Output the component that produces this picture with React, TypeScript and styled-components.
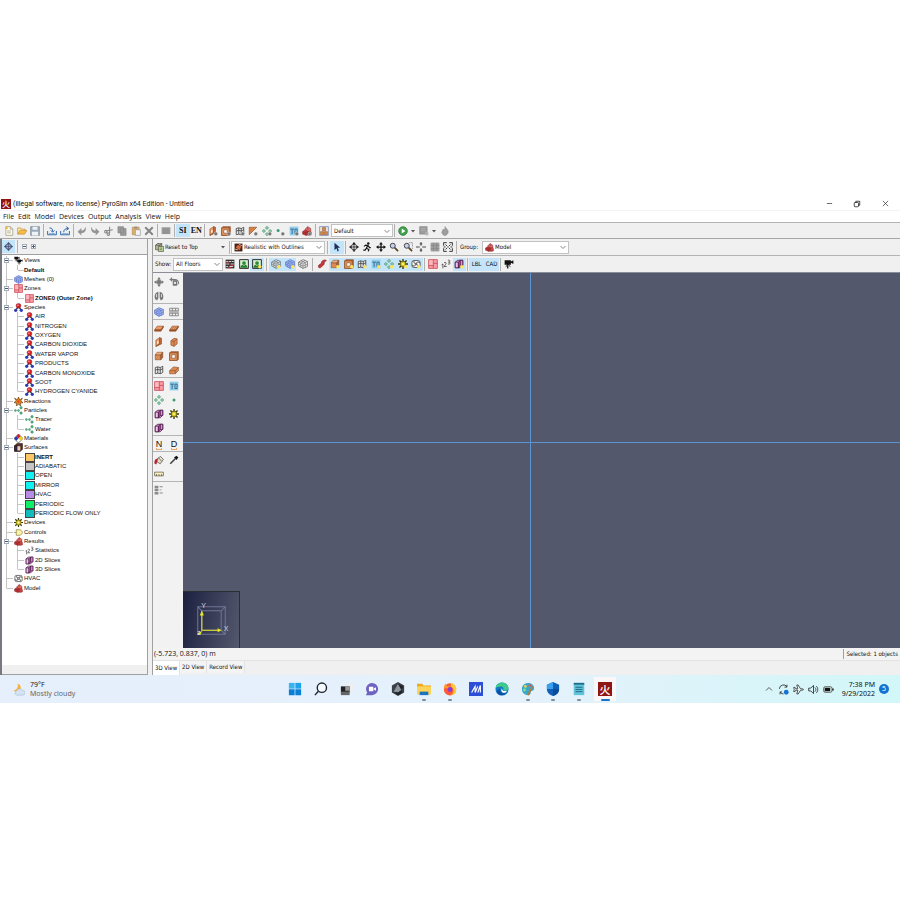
import React from "react";
import styled, { createGlobalStyle, css } from "styled-components";

const UI = '"Noto Sans", "Open Sans", sans-serif';
const TAHOMA = '"DejaVu Sans Condensed", "DejaVu Sans", sans-serif';
const ARIAL = '"Liberation Sans", Arial, sans-serif';

const GlobalStyle = createGlobalStyle`
  *, *::before, *::after { box-sizing: border-box; }
  body { margin: 0; background: #fff; font-family: ${UI}; font-size: 6px; color: #111; }
  button, select { font: inherit; color: inherit; border: 0; background: none; padding: 0; margin: 0; }
  ul { list-style: none; margin: 0; padding: 0; }
`;

/* ---------- icons (16 x 16 grid) ---------- */

const box3d = (front: string, top: string, side: string, line = "#8a4f2a") => (
  <g stroke={line} strokeWidth="1" strokeLinejoin="round">
    <path d="M2 6h9v8H2z" fill={front} />
    <path d="M2 6l3-4h9l-3 4z" fill={top} />
    <path d="M11 6l3-4v8l-3 4z" fill={side} />
  </g>
);

const orangeBox = box3d("#dc8a52", "#f0b488", "#b9622f");
const gear = (
  <g>
    <path d="M8 0v16M0 8h16M2.3 2.3l11.4 11.4M13.7 2.3L2.3 13.7" stroke="#3d3a08" strokeWidth="2.2" />
    <circle cx="8" cy="8" r="4.6" fill="#d9c81e" stroke="#3d3a08" />
    <circle cx="8" cy="8" r="1.6" fill="#fff6a0" />
  </g>
);
const greenCross = (
  <g fill="#8fd6ae" stroke="#2e7c53">
    <path d="M8 .5L10.500 3 8 5.500 5.500 3zM8 10.500l2.500 2.500L8 15.500 5.500 13zM3 5.500L5.500 8 3 10.500.5 8zM13 5.500L15.500 8 13 10.500 10.500 8z" />
  </g>
);
const mesh = (fill: string, line: string) => (
  <g stroke={line} fill={fill} strokeWidth="1">
    <path d="M1 5l7-4 7 3v8l-7 3-7-4z" />
    <path d="M1 5l7 3 7-4M8 8v7M4.500 6.500v6.500M11.500 6v7.500M1 8l7 3.500L15 8M4.500 3l7 3M11.500 2.500l-7 4" fill="none" strokeWidth=".8" />
  </g>
);
const zone = (
  <g>
    <path d="M1 1h14v14H1z" fill="#f99ba4" stroke="#c8404e" strokeWidth="1.200" />
    <path d="M2 2h6v8H2z" fill="#fbb8bd" />
    <path d="M8.500 1v14M9 7h6M1 10.500h8" stroke="#b83a48" fill="none" />
  </g>
);
const device = (
  <g>
    <path d="M1 1h14v14H1z" fill="#8fcdec" />
    <path d="M2 5h6M5 5v8M9.500 5v7h3.500V5z" stroke="#2f6488" strokeWidth="1.400" fill="none" />
  </g>
);
const slice = (
  <g stroke="#3a1238" strokeWidth="1.200" strokeLinejoin="round">
    <path d="M2 5l4-3h8v8l-4 4H2z" fill="#f3a4e6" />
    <path d="M2 5h5v9H2z" fill="#f9bdf0" />
    <path d="M7 5l3-3v8l-3 4z" fill="#c765bd" />
    <path d="M10 2h4v8l-4 1z" fill="#e88ddb" />
  </g>
);
const hvac = (
  <g fill="#fff" stroke="#333" strokeWidth="1.200">
    <rect x="1.500" y="2.500" width="13" height="11" rx="3" />
    <path d="M8 8C5 7 4 5 5 3M8 8c1-3 3-4 6-2M8 8c3 1 4 3 3 5M8 8c-1 3-3 4-6 2" fill="none" strokeWidth="1.500" />
    <circle cx="8" cy="8" r="1.500" />
  </g>
);
const modelIcon = (
  <g stroke="#7e2020" strokeWidth=".8" strokeLinejoin="round">
    <path d="M5 5l4-4 5 3v5l-5 1z" fill="#dd6c6a" />
    <path d="M1 9l4-3 5 3v5l-3 1-6-2z" fill="#bd3438" />
    <path d="M9 9l4-1 2 2v4l-5 1z" fill="#ce4446" />
    <path d="M1 9l5 2 4-2M6 11v4M9 1v5" fill="none" />
  </g>
);
const frame = (
  <g stroke="#8a4f2a">
    <path d="M1 3l2-2h12v12l-2 2H1z" fill="#b9622f" />
    <path d="M1 3h12v12H1z" fill="#e2935c" />
    <path d="M4.500 6h5.500v5.500H4.500z" fill="#fff" />
  </g>
);
const filmGrid = (
  <g stroke="#333" strokeWidth="1.200" fill="#ececec">
    <path d="M2 4l4-1 4 1 4-2v10l-4 2-4-1-4 1z" />
    <path d="M6 3v10M10 4v10M2 8l4-1 4 1 4-2" fill="none" />
  </g>
);
const magnifier = (
  <g>
    <path d="M9 9l5.500 5.500" stroke="#5a4020" strokeWidth="2.600" />
    <circle cx="6" cy="6" r="4" fill="#c7cdf0" stroke="#333" strokeWidth="1.400" />
  </g>
);
const fourArrows = (c: string) => (
  <g fill={c}>
    <path d="M7 3h2v10H7zM3 7h10v2H3z" />
    <path d="M8 0l3 4H5zM8 16l3-4H5zM0 8l4-3v6zM16 8l-4-3v6z" />
  </g>
);
const person = (
  <g>
    <circle cx="10" cy="2.500" r="2" fill="#111" />
    <path d="M3 7l3-2 4 1 2 3h2M9 6l-2 4 4 2-1 3M7 10l-2 3H2" stroke="#111" strokeWidth="1.900" fill="none" />
  </g>
);
const camera = (
  <g fill="#111">
    <path d="M1 2h10v7H1zM11 4l4-2v6l-4-2zM5 9h2v6H5z" />
    <path d="M3 13l2-4h3l2 4" fill="none" stroke="#111" />
  </g>
);
const molecule = (
  <g>
    <path d="M8 6l-5 7M8 6l5 7" stroke="#223" strokeWidth="2" />
    <circle cx="8" cy="5" r="4.300" fill="#d81f28" stroke="#7c1a20" strokeWidth=".8" />
    <circle cx="3" cy="13" r="2.900" fill="#2a3cb8" />
    <circle cx="13" cy="13" r="2.900" fill="#2a3cb8" />
    <circle cx="7" cy="4" r="1.300" fill="#ffb0b0" />
  </g>
);
const particles = (
  <g fill="#58b58b" stroke="#2c7d58" strokeWidth=".8">
    <circle cx="2.500" cy="8" r="1.800" />
    <circle cx="8" cy="8" r="1.800" />
    <circle cx="12.500" cy="3" r="2.200" />
    <circle cx="12.500" cy="12.500" r="2.200" />
  </g>
);
const numbers = (
  <g stroke="#333" strokeWidth="1.200" fill="none">
    <path d="M1 9l2-1v7M5 6c3-2 4 1 2 3l-2 3h4M11 2c4-1 4 3 1 3 4 0 3 4-1 3" />
  </g>
);
const calendar = (
  <g>
    <path d="M1 1h14v14H1z" fill="#333" />
    <path d="M2 4h3M6 4h4M11 4h3M2 8h5M9 8h5M2 12h3M7 12h6" stroke="#e0d6d6" strokeWidth="1.500" />
    <path d="M2 6h5M8 10h6M4 14h6" stroke="#cc3a3a" strokeWidth="1.500" />
  </g>
);
const picture = (
  <g>
    <path d="M1 1h14v14H1z" fill="#d9f0d2" stroke="#222" strokeWidth="1.500" />
    <path d="M2 14c1-5 4-5 6-3 2-3 4-2 6 3z" fill="#237a2c" />
    <circle cx="8" cy="6.500" r="3" fill="#2b8c34" />
  </g>
);
const glow = <circle cx="12.500" cy="12.500" r="2.800" fill="#ffe45a" />;
const plus = <circle cx="12.500" cy="12.500" r="3" fill="#777" stroke="#fff" strokeWidth=".6" />;
const flat = (
  <g stroke="#8a4f2a" strokeLinejoin="round">
    <path d="M1 11l4-6h10l-4 6z" fill="#eb9a64" />
    <path d="M1 11h10l4-6v2l-4 6H1z" fill="#a95326" />
  </g>
);
const wall = (
  <g stroke="#8a4f2a" strokeLinejoin="round">
    <path d="M3 5l6-4v10l-6 4z" fill="#eb9a64" />
    <path d="M9 1l3 1v9l-9 4 6-4z" fill="#bd6a38" />
    <path d="M5 7l2-1v4l-2 1z" fill="#fff" stroke="none" />
  </g>
);
const redShape = <path d="M3 14c-3-6 4-5 4-8 0-4 7-6 8-3-5 0-2 5-5 7-2 1-4 5-7 4z" fill="#c8343a" stroke="#7a2222" />;

const ICONS: Record<string, React.ReactNode> = {
  file: <g stroke="#8b8b75"><path d="M3 1h7l4 4v10H3z" fill="#fffbe9" /><path d="M10 1v4h4M5 8h6M5 11h6" fill="none" /><circle cx="4" cy="3" r="2" fill="#f2b632" stroke="none" /></g>,
  open: <g stroke="#c08a2c"><path d="M1 13V3h5l1 2h6v3" fill="#fbe2a0" /><path d="M1 13l4-6h11l-4 6z" fill="#f7bd48" /></g>,
  save: <g><path d="M1 1h14v14H1z" fill="#9aabbd" stroke="#71818f" /><path d="M4 1h8v5H4zM3 9h10v6H3z" fill="#eef3f7" /></g>,
  importIn: <g fill="none" stroke="#2b62a8" strokeWidth="1.500"><path d="M1 8v6h14V8" /><path d="M4 3c4 0 5 2 5 6M6 7l3 3 3-3" /><path d="M3 12h10" stroke="#8ab2df" /></g>,
  exportOut: <g fill="none" stroke="#2b62a8" strokeWidth="1.500"><path d="M1 8v6h14V8" /><path d="M6 10c0-4 2-6 7-6M10 1l4 3-4 3" /><path d="M3 12h10" stroke="#8ab2df" /></g>,
  undo: <path d="M1 9l6-6v4c5 0 5-3 7-6 1 7-2 10-7 10v4z" fill="#949494" />,
  redo: <path d="M15 9L9 3v4C4 7 4 4 2 1 1 8 4 11 9 11v4z" fill="#949494" />,
  cut: <g stroke="#858585" fill="none" strokeWidth="1.700"><path d="M9 1v10M3 8l11-2" /><circle cx="7" cy="13" r="2" /><circle cx="3" cy="9" r="2" /></g>,
  copy: <g fill="#9a9a9a" stroke="#858585"><path d="M1.500 1h9v10h-9zM5.500 4h9v11h-9z" /></g>,
  paste: <g><path d="M2 2h11v12H2z" fill="#dcae6a" stroke="#b48a50" /><path d="M5 1h5v3H5z" fill="#9a8f84" /><path d="M7 6h8v9H7z" fill="#f4f4f4" stroke="#8a8f98" /></g>,
  remove: <path d="M2 2l12 12M14 2L2 14" stroke="#858585" strokeWidth="3.200" />,
  props: <g><path d="M1 2h14v11H1z" fill="#9b9b9b" /><path d="M3 5h10M3 8h10M3 11h10" stroke="#858585" /></g>,
  obstNew: <g>{wall}{plus}</g>,
  holeNew: <g>{frame}{plus}</g>,
  ventNew: <g>{filmGrid}{plus}</g>,
  slabNew: <g><path d="M2 14V2h12z" fill="#d9813f" stroke="#8a4f2a" />{plus}</g>,
  crossNew: <g>{greenCross}{plus}</g>,
  dotNew: <g><circle cx="5" cy="7" r="2.400" fill="#3d9a70" />{plus}</g>,
  devNew: <g>{device}{plus}</g>,
  modelNew: <g>{modelIcon}{plus}</g>,
  tree: <g stroke="#5570b0"><path d="M1 1h14v14H1z" fill="#f0e8de" /><path d="M5.500 2.500h5v5h-5zM2.500 9h5v5h-5zM8.500 9h5v5h-5z" fill="#d3874d" stroke="#a0643a" /></g>,
  run: <g><circle cx="8" cy="8" r="7" fill="#3fa14a" stroke="#1f6e2a" /><path d="M6 4l6 4-6 4z" fill="#fff" /></g>,
  results: <g><path d="M1 1h12v12H1z" fill="#9c9c9c" stroke="#858585" /><path d="M10 10h5v5h-5z" fill="#b5b5b5" /><path d="M3 4h8M3 7h8" stroke="#b4b4b4" /></g>,
  flame: <path d="M8 1c1 3 6 5 5 9-.5 3-3 5-5 5s-5-2-5-5c0-2 2-3 2-5l2 2c1-2 1-4 1-6z" fill="#9d9d9d" stroke="#858585" />,
  reset: <g stroke="#2a301f"><path d="M1 4l3-3h8v8l-3 3H1z" fill="#b8bca8" /><path d="M1 4h8v8M9 4l3-3" fill="none" /><path d="M6 6h9v9H6z" fill="#d0e8a8" /><path d="M8 9h5M8 12h5" /></g>,
  shaded: <g><path d="M1 1h14v14H1z" fill="#4a1f14" /><path d="M3 8l4-5 6 3-3 7z" fill="#d06a3a" /><path d="M2 11l5 1M9 2l5 3" stroke="#f2d4b8" strokeWidth="1.500" /></g>,
  pointer: <path d="M4 1v12l3-3 2 5 2-1-2-5h4z" fill="#1b2c55" />,
  orbit: <g fill="none" stroke="#111" strokeWidth="1.200"><path d="M8 3v10M3 8h10" /><circle cx="8" cy="8" r="4.500" /><path d="M8 0l2.500 3h-5zM8 16l2.500-3h-5zM0 8l3-2.500v5zM16 8l-3-2.500v5z" fill="#111" stroke="none" /></g>,
  person,
  pan: fourArrows("#111"),
  zoom: magnifier,
  zoomBox: <g>{magnifier}<path d="M10 1h5v7M15 9v3" fill="none" stroke="#555" strokeDasharray="2 1" /></g>,
  center: <path d="M8 0v6M8 10v6M0 8h6M10 8h6M6 3h4M6 13h4" stroke="#222" strokeWidth="1.300" />,
  gridOff: <g><path d="M1 1h14v14H1z" fill="#9e9e9e" /><path d="M1 5.500h14M1 10.500h14M5.500 1v14M10.500 1v14" stroke="#858585" /></g>,
  fit: <g fill="none" stroke="#222" strokeWidth="1.400"><path d="M1 6V1h5M10 1h5v5M15 10v5h-5M6 15H1v-5" /><path d="M4 4l3 3M12 4L9 7M12 12L9 9M4 12l3-3M1 8h3M12 8h3" /></g>,
  modelIcon,
  calendar,
  picture,
  picture2: <g>{picture}{glow}</g>,
  meshGray: <g>{mesh("#d6dde2", "#5b6267")}{glow}</g>,
  meshBlue: <g>{mesh("#a9bdf0", "#4a64c0")}{glow}</g>,
  meshOut: mesh("#fafafa", "#444"),
  mesh: mesh("#a9bdf0", "#4a64c0"),
  redShape,
  obst: <g>{orangeBox}{glow}</g>,
  hole: <g>{frame}{glow}</g>,
  vent: <g>{filmGrid}{glow}</g>,
  dev: <g>{device}{glow}</g>,
  cross: <g>{greenCross}{glow}</g>,
  gearGlow: <g>{gear}{glow}</g>,
  hvacGlow: <g>{hvac}{glow}</g>,
  zone,
  numbers,
  sliceGlow: <g>{slice}{glow}</g>,
  slice,
  camera,
  views: <g><g transform="scale(.65)">{camera}</g><g transform="translate(5 5) scale(.68)">{camera}</g></g>,
  molecule,
  reaction: <g><path d="M8 0l2 5 5-3-3 5 4 3-5 1 1 5-4-3-4 3 1-5-5-1 4-3-3-5 5 3z" fill="#df8a1e" stroke="#5a2a08" /><circle cx="8" cy="8" r="2" fill="#e33" /></g>,
  particles,
  material: <g><path d="M8 0l8 8-8 8-8-8z" fill="#fff" stroke="#111" /><path d="M8 0l4 4-4 4-4-4z" fill="#d4202a" /><path d="M4 4l4 4-4 4-4-4z" fill="#2338b8" /><path d="M12 4l4 4-4 4-4-4z" fill="#f0d020" /></g>,
  surfaces: <g stroke="#221512"><path d="M1 5l4-4h10v10l-4 4H1z" fill="#5b2f24" /><path d="M5 5h7v9H5z" fill="#f3c9b5" /><path d="M1 5h4v9H1z" fill="#23306b" /></g>,
  gear,
  controls: <path d="M0 8h4M4 3h5c4 0 5 3 6 5-1 2-2 5-6 5H4z" fill="#fbf3a6" stroke="#8d8540" strokeWidth="1.300" />,
  hvac,
  move: <g>{fourArrows("#777")}<path d="M5 5h6v6H5z" fill="#777" /></g>,
  rotate: <g fill="#777"><path d="M6 5h7v9H6z" /><path d="M1 4h9a5 5 0 014 8" fill="none" stroke="#777" strokeWidth="1.800" /><path d="M1 4l4-4v8z" /><circle cx="9.500" cy="9.500" r="1.800" fill="#eee" /></g>,
  mirror: <g fill="#777"><path d="M7 1C1 2 0 9 2 13l3 2 2-4zM9 1c6 1 7 8 5 12l-3 2-2-4z" /><path d="M4 5v5M12 5v5" stroke="#f0f0f0" strokeWidth="1.300" /></g>,
  meshSplit: <g fill="none" stroke="#777" strokeWidth="1.300"><path d="M1 2h14v4H1zM1 10h14v4H1zM5.500 2v4M10.500 2v4M5.500 10v4M10.500 10v4M0 8h16" /></g>,
  flat,
  flat2: <g>{flat}<path d="M5 9l3-3M9 9l3-3" stroke="#8a4a22" /></g>,
  wall,
  wall2: <g stroke="#8a4f2a"><path d="M3 6l5-4 5 1v8l-5 4-5-2z" fill="#dc8a52" /><path d="M3 6l5 1 5-4M8 7v8" fill="none" /></g>,
  orangeBox,
  frame,
  filmGrid,
  roof: <g stroke="#8a4f2a" strokeLinejoin="round"><path d="M1 9l6-6 8 1v5l-5 5H1z" fill="#dc8a52" /><path d="M1 9h9l5-5M10 9v5" fill="none" /></g>,
  device,
  greenCross,
  dot: <circle cx="8" cy="8" r="2.400" fill="#3d9a70" />,
  bucket: <g><path d="M5 7l5-5 5 5-5 7-5-3z" fill="#e6e2cc" stroke="#333" /><path d="M1 14c-1-5 1-9 6-8l-2 3-1 6z" fill="#b5202a" /><path d="M7 4l5 6" stroke="#333" /></g>,
  dropper: <g><path d="M2 14l8-8" stroke="#444" strokeWidth="2.500" /><path d="M8 4l4 4 3-4-3-3z" fill="#111" /></g>,
  ruler: <g stroke="#4d4524"><path d="M1 5h14v6H1z" fill="#f5efc8" /><path d="M4 8v3M8 8v3M12 8v3" /></g>,
  legend: <g fill="#8a8a8a"><path d="M1 1h6v4H1zM1 6h6v4H1zM1 11h6v4H1zM9 2h5v1.500H9zM9 7h3v1.500H9zM9 12h5v1.500H9z" /></g>,
  axes: <g><path d="M8 0l8 8-8 8-8-8z" fill="#5a6078" /><path d="M8 3l5 5-5 5-5-5z" fill="#8fb0ec" /><path d="M8 1v14M1 8h14" stroke="#333b55" /></g>,

  windows: <g fill="#1791e0"><path d="M1 1h6.600v6.600H1z" fill="#39b4ee" /><path d="M8.400 1H15v6.600H8.400z" fill="#1fa2e8" /><path d="M1 8.400h6.600V15H1zM8.400 8.400H15V15H8.400z" fill="#0a7fd6" /></g>,
  search: <g fill="none" stroke="#1c2733" strokeWidth="1.600"><circle cx="9" cy="6.500" r="5.300" fill="#f5fafd" /><path d="M5 10.500L1 15" /></g>,
  desktops: <g><path d="M6 1h10v10H6z" fill="#eceef0" /><path d="M1 5h10v7H1z" fill="#222" /><path d="M1 11h10v4H1z" fill="#666" /><path d="M6 5h5v5H6z" fill="#999" /></g>,
  chat: <g><path d="M8 1a7 7 0 110 14H1l1.500-3A7 7 0 018 1z" fill="#6e63c0" /><path d="M4.500 5.500h5v5h-5zM10 7.500l2.500-1.500v4L10 8.500z" fill="#fff" /></g>,
  hexagon: <g><path d="M8 0l7 4v8l-7 4-7-4V4z" fill="#3c4148" /><path d="M8 2l4 7-4 3-5-1z" fill="#8d949c" /><path d="M8 2l4 7 2-4zM3 11l5 1 4-3 1 3-5 3z" fill="#20242a" /></g>,
  folder: <g><path d="M0 2h6l1.500 2H16v10H0z" fill="#f0a91c" /><path d="M0 5h16v9H0z" fill="#fdd45a" /><path d="M3 11h10v4H3z" fill="#1b75bd" /></g>,
  firefox: <g><circle cx="8" cy="8.500" r="7" fill="#ff5a35" /><path d="M9 1c5 1 7 5 6 9 0 3-3 5-6 5 4-3 4-8 0-10z" fill="#ffc93a" /><path d="M1 7c0-3 1-4 2-5l2 3c3-1 4 1 6 2z" fill="#ff9a2b" /><circle cx="8" cy="8.500" r="2.800" fill="#8a3bd0" /></g>,
  blueApp: <g><path d="M0 0h16v16H0z" fill="#2d4fd8" /><path d="M3 12l4-7v7l3-7M10 12l3-8v8" fill="none" stroke="#fff" strokeWidth="1.300" /></g>,
  edge: <g><circle cx="8" cy="8" r="7.500" fill="#1278c8" /><path d="M.7 7C1 3 4 .5 8 .5c5 0 8 4 7.300 7-.6 3-5 3-6 1.500 1-1 .5-4-2.500-4C4 5 1.500 6 .7 7z" fill="#3fc98a" /><path d="M6 8c-1 4 3 6 7 4-2 3-6 4-9 2-3-3-1-6 2-6z" fill="#0b4f9e" /><path d="M8 7c0 3 2 4 6 3l-2 2c-4 1-6-2-4-5z" fill="#fff" /></g>,
  paint: <g><path d="M8 1c5 0 7 3 7 6 0 4-4 2-4 5 0 2-1 3-3 3-4 0-7-3-7-7s3-7 7-7z" fill="#39a9c9" /><circle cx="5" cy="5" r="1.500" fill="#f3d14a" /><circle cx="10" cy="4" r="1.500" fill="#e8594a" /><circle cx="4" cy="9" r="1.500" fill="#8fe08a" /><path d="M13 5L8 15" stroke="#b37a3c" strokeWidth="2" /></g>,
  shield: <g><path d="M8 0l7 3v5c0 4-3 7-7 8-4-1-7-4-7-8V3z" fill="#1060b8" /><path d="M8 0v8H1V3z" fill="#3aa0ee" /><path d="M8 8h7c0 4-3 7-7 8z" fill="#0b4b98" /></g>,
  notepad: <g><path d="M2 1h12v14H2z" fill="#5fc3da" /><path d="M2 1h12v2H2z" fill="#1d6a86" /><path d="M4 6h8M4 8.500h8M4 11h8" stroke="#1c5f7a" /></g>,
  weather: <g><path d="M7 1a5 5 0 11-5 8c4 0 6-4 5-8z" fill="#f6b13a" /><path d="M6 15a2.800 2.800 0 010-5.500 4 4 0 017-.5 3 3 0 010 6z" fill="#d5e2f1" stroke="#9db4d0" strokeWidth=".6" /></g>,
  sync: <g fill="none" stroke="#333" strokeWidth="1.300"><path d="M2 7a6 6 0 0111-3M13 1v3.500H9.500M3 15v-3.500h3M3 12a6 6 0 005 2.500" /><circle cx="12" cy="12" r="3.500" fill="#1575d2" stroke="none" /></g>,
  plane: <path d="M1 5h2l1 2h3L5.500 1.500h2L11 7h3a1 1 0 010 2h-3l-3.500 5.500h-2L7 9H4l-1 2H1l.8-3z" fill="#eafafa" stroke="#333" strokeWidth="1.200" />,
  speaker: <path d="M1 6h3l4-4v12l-4-4H1zM10 5c2 2 2 4 0 6M12 3c3 3 3 7 0 10" fill="none" stroke="#333" strokeWidth="1.300" />,
  battery: <g><rect x="1" y="4" width="12" height="8" rx="2" fill="#e8fafa" stroke="#222" /><rect x="2.500" y="5.500" width="8" height="5" fill="#111" /><path d="M14.500 6.500v3" stroke="#111" strokeWidth="2" /></g>,
  chevUp: <path d="M2 11l6-6 6 6" fill="none" stroke="#333" strokeWidth="1.600" />,
  min: <path d="M2 8h12" stroke="#222" strokeWidth="1.500" />,
  max: <g fill="none" stroke="#222" strokeWidth="1.600"><rect x="2.500" y="5" width="8.500" height="8.500" rx="1.500" /><path d="M5.500 5V2.500h8v8H11" /></g>,
  close: <path d="M2 2l12 12M14 2L2 14" stroke="#222" strokeWidth="1.500" />,
};

const Svg = styled.svg<{ $size: number }>`
  width: ${(p) => p.$size}px;
  height: ${(p) => p.$size}px;
  display: block;
  flex: none;
`;
const Icon = ({ name, size = 10 }: { name: string; size?: number }) => (
  <Svg $size={size} viewBox="0 0 16 16" aria-hidden="true">{ICONS[name]}</Svg>
);

/* ---------- window frame ---------- */

const Shell = styled.main`
  margin-top: 197px;
  display: flex;
  flex-direction: column;
`;
const TitleBar = styled.header`
  display: flex;
  align-items: center;
  height: 14px;
  padding: 0 1px;
  gap: 2px;
  border-bottom: 1px solid #f3f3f3;
`;
const Title = styled.h1`
  margin: 0;
  flex: 1;
  font: 400 7px/10px Roboto, "Open Sans", sans-serif;
  color: #111;
`;
const WindowButtons = styled.div`
  display: flex;
`;
const Seal = styled.span<{ $size: number; $font: number }>`
  display: grid;
  place-items: center;
  width: ${(p) => p.$size}px;
  height: ${(p) => p.$size}px;
  background: #8f1414;
  color: #fff;
  font: 500 ${(p) => p.$font}px/1 "Noto Sans CJK JP", sans-serif;
`;
const WindowButton = styled.button`
  width: 28px;
  height: 13px;
  display: grid;
  place-items: center;
`;
const MenuBar = styled.nav`
  display: flex;
  align-items: center;
  height: 11px;
  gap: 4px;
  padding-left: 3px;
  font: 7px/10px "Open Sans", sans-serif;
`;

/* ---------- toolbars ---------- */

const Bar = styled.div<{ $top?: boolean }>`
  display: flex;
  align-items: center;
  height: 16px;
  background: #f0f0f0;
  padding-left: 2px;
  white-space: nowrap;
  font: 6px/10px ${TAHOMA};
  ${(p) => p.$top && css`
    border-top: 1px solid #b4b4b4;
  `}
`;
const Group = styled.div<{ $w: number }>`
  display: flex;
  width: ${(p) => p.$w}px;
`;
const Tool = styled.button<{ $on?: boolean }>`
  flex: 1;
  height: 13px;
  display: grid;
  place-items: center;
  background: ${(p) => (p.$on ? "#c4e4fa" : "transparent")};
`;
const SerifTool = styled(Tool)`
  font: 700 8px/8px "Liberation Serif", serif;
  color: #111;
`;
const Sep = styled.span<{ $gap?: number }>`
  width: 1px;
  height: 13px;
  margin: 0 ${(p) => p.$gap ?? 1}px;
  background: #b0b0b0;
`;
const Combo = styled.label<{ $w: number; $plain?: boolean }>`
  display: flex;
  align-items: center;
  width: ${(p) => p.$w}px;
  height: 13px;
  padding: 0 2px;
  gap: 1px;
  ${(p) => p.$plain ? css`
    padding-left: 0;
  ` : css`
    background: #fff;
    border: 1px solid #c2c2c2;
  `}
  select {
    appearance: none;
    flex: 1;
    min-width: 0;
    height: 11px;
    outline: none;
    font: inherit;
  }
`;
const Caret = styled.svg`
  width: 6px;
  height: 6px;
  flex: none;
`;
const CaretButton = styled.button`
  width: 8px;
  height: 13px;
  display: grid;
  place-items: center;
`;
const FieldName = styled.span<{ $w: number; $indent?: number }>`
  width: ${(p) => p.$w}px;
  padding-left: ${(p) => p.$indent ?? 0}px;
`;

const Down = ({ solid }: { solid?: boolean }) => (
  <Caret viewBox="0 0 6 6" aria-hidden="true">
    {solid ? <path d="M1 2h4L3 4.500z" fill="#555" /> : <path d="M.5 2L3 4.500 5.500 2" fill="none" stroke="#666" strokeWidth=".8" />}
  </Caret>
);

const Picker = ({ label, value, icon, width, plain }: { label: string; value: string; icon?: string; width: number; plain?: boolean }) => (
  <Combo $w={width} $plain={plain}>
    {icon && <Icon name={icon} size={9} />}
    <select aria-label={label} defaultValue={value}><option>{value}</option></select>
    <Down solid={plain} />
  </Combo>
);

const Tools = ({ names, on = "", width }: { names: string; on?: string; width: number }) => {
  const active = on.split(" ");
  return (
    <Group $w={width}>
      {names.split(" ").map((n) => (
        <Tool key={n} aria-label={n} $on={active.includes(n)}><Icon name={n} /></Tool>
      ))}
    </Group>
  );
};

/* ---------- workspace ---------- */

const Workspace = styled.div`
  display: grid;
  grid-template-columns: 148px minmax(0, 1fr);
  column-gap: 4px;
  background: #f0f0f0;
  border-top: 1px solid #a6a6a6;
`;
const Sidebar = styled.aside`
  display: flex;
  flex-direction: column;
  border-left: 2px solid #77797f;
  border-right: 1px solid #a0a0a0;
`;
const SidebarHead = styled.div`
  display: flex;
  align-items: center;
  height: 15px;
`;
const ExpandIcon = styled.span<{ $plus?: boolean }>`
  position: relative;
  display: grid;
  place-items: center;
  width: 5px;
  height: 5px;
  border: 1px solid #a4acb8;
  background: #fff;
  &::after { content: ""; width: 3px; height: 1px; background: #4a5a80; }
  ${(p) => p.$plus && css`
    &::before { content: ""; position: absolute; width: 1px; height: 3px; background: #4a5a80; }
  `}
`;
const TreeBox = styled.div`
  flex: 1;
  background: #fff;
  border-top: 1px solid #a0a0a0;
  padding-top: 1px;
`;
const TreeFoot = styled.div`
  height: 10px;
  border-bottom: 1px solid #a0a0a0;
`;
const Tree = styled.ul`
  display: grid;
  grid-auto-rows: 1fr;
  height: 337px;
  font: 6px/9px ${ARIAL};
  color: #111;
  white-space: nowrap;
`;
const Row = styled.li<{ $bold?: boolean }>`
  display: flex;
  align-items: center;
  min-height: 0;
  font-weight: ${(p) => (p.$bold ? 700 : 400)};
`;
const Guide = styled.span<{ $kind: string }>`
  display: grid;
  place-items: center;
  align-self: stretch;
  flex: none;
  width: 11px;
  padding-right: 2px;
  background-repeat: no-repeat;
  background-image: linear-gradient(#c4c4c4, #c4c4c4)${(p) =>
    p.$kind === "tee" || p.$kind === "end" ? ", linear-gradient(#c4c4c4, #c4c4c4)" : ""};
  background-size: 1px ${(p) => (p.$kind === "end" ? "50%" : "100%")}, 6px 1px;
  background-position: 4px 0, 5px 50%;
`;
const RowIcon = styled.span`
  width: 11px;
  display: grid;
  place-items: center;
`;
const Swatch = styled.i<{ $c: string }>`
  width: 10px;
  height: 9px;
  border: 1px solid #444;
  background: ${(p) => p.$c};
`;

type Node = { t: string; icon?: string; color?: string; bold?: boolean; kids?: Node[] };
const sp = (t: string): Node => ({ t, icon: "molecule" });
const NODES: Node[] = [
  { t: "Views", icon: "views", kids: [{ t: "Default", bold: true }] },
  { t: "Meshes (0)", icon: "mesh" },
  { t: "Zones", icon: "zone", kids: [{ t: "ZONE0 (Outer Zone)", icon: "zone", bold: true }] },
  { t: "Species", icon: "molecule", kids: ["AIR", "NITROGEN", "OXYGEN", "CARBON DIOXIDE", "WATER VAPOR", "PRODUCTS", "CARBON MONOXIDE", "SOOT", "HYDROGEN CYANIDE"].map(sp) },
  { t: "Reactions", icon: "reaction" },
  { t: "Particles", icon: "particles", kids: [{ t: "Tracer", icon: "particles" }, { t: "Water", icon: "particles" }] },
  { t: "Materials", icon: "material" },
  {
    t: "Surfaces", icon: "surfaces", kids: [
      { t: "INERT", color: "#fbc765", bold: true },
      { t: "ADIABATIC", color: "#c6c6c6" },
      { t: "OPEN", color: "#10f2f2" },
      { t: "MIRROR", color: "#10f2f2" },
      { t: "HVAC", color: "#b78be6" },
      { t: "PERIODIC", color: "#0bf067" },
      { t: "PERIODIC FLOW ONLY", color: "#10bcbc" },
    ],
  },
  { t: "Devices", icon: "gear" },
  { t: "Controls", icon: "controls" },
  { t: "Results", icon: "modelIcon", kids: [{ t: "Statistics", icon: "numbers" }, { t: "2D Slices", icon: "slice" }, { t: "3D Slices", icon: "slice" }] },
  { t: "HVAC", icon: "hvac" },
  { t: "Model", icon: "modelIcon" },
];

const TreeRows = () => (
  <Tree role="tree">
    {NODES.flatMap((n, i) => [
      <Row key={n.t} role="treeitem" $bold={n.bold}>
        <Guide $kind={i === NODES.length - 1 ? "end" : "tee"}>{n.kids && <ExpandIcon />}</Guide>
        <RowIcon><Icon name={n.icon!} size={9} /></RowIcon>
        <span>{n.t}</span>
      </Row>,
      ...(n.kids ?? []).map((k, j) => (
        <Row key={n.t + k.t} role="treeitem" $bold={k.bold}>
          <Guide $kind="line" />
          <Guide $kind={j === n.kids!.length - 1 ? "end" : "tee"} />
          {(k.icon || k.color) && <RowIcon>{k.color ? <Swatch $c={k.color} /> : <Icon name={k.icon!} size={9} />}</RowIcon>}
          <span>{k.t}</span>
        </Row>
      )),
    ])}
  </Tree>
);

const Editor = styled.section`
  display: flex;
  flex-direction: column;
  border-left: 1px solid #a0a0a0;
  min-width: 0;
`;
const FilterBar = styled(Bar)`
  height: 17px;
`;
const Stage = styled.div`
  display: grid;
  grid-template-columns: 30px minmax(0, 1fr);
  border-top: 1px solid #8b8d98;
`;
const Palette = styled.div`
  padding-top: 1px;
  background: #f2f2f2;
`;
const Section = styled.div`
  display: grid;
  grid-template-columns: 15px 15px;
  grid-auto-rows: 14px;
  padding-top: 1px;
  border-bottom: 1px solid #b4b4b4;
  &:last-child { border-bottom: 0; }
`;
const PaletteTool = styled.button`
  display: grid;
  place-items: center;
  padding-right: 3px;
`;
const Letter = styled.span`
  font: 9px/8px ${ARIAL};
  color: #111;
  box-shadow: 0 2px 0 -1px #f2f2f2, 0 2px 0 #eda668;
`;
const Canvas = styled.div`
  position: relative;
  min-height: 375px;
  background: #54586d;
  &::before, &::after { content: ""; position: absolute; border: 0 solid #5b94d0; }
  &::before { left: 48.4%; top: 0; bottom: 0; border-left-width: 1px; }
  &::after { top: 45%; left: 0; right: 0; border-top-width: 1px; }
`;
const AxisBox = styled.div`
  position: absolute;
  left: 0;
  bottom: 0;
  width: 57px;
  height: 57px;
  background: linear-gradient(100deg, #1b2040, #54586d);
  border-top: 1px solid #2b2d35;
  border-right: 1px solid #2b2d35;
  svg { display: block; width: 56px; height: 56px; }
`;
const Status = styled.footer`
  display: flex;
  justify-content: space-between;
  align-items: center;
  height: 12px;
  background: #f3f3f3;
  font: 6px/10px ${TAHOMA};
`;
const Coordinates = styled.span`
  padding-left: 1px;
  font: 7px/10px "Open Sans", sans-serif;
`;
const Selected = styled.span`
  border-left: 1px solid #a0a0a0;
  padding: 0 2px;
`;
const Tabs = styled.div`
  display: flex;
  height: 15px;
  background: #f0f0f0;
  border-top: 1px solid #e2e2e2;
  font: 6px/12px ${TAHOMA};
`;
const Tab = styled.button<{ $active?: boolean }>`
  padding: 0 2px;
  height: ${(p) => (p.$active ? 14 : 12)}px;
  background: ${(p) => (p.$active ? "#fff" : "#f4f4f4")};
  border-right: 1px solid #e2e2e2;
`;
const TextTool = styled(Tool)`
  font: 6px/8px ${TAHOMA};
`;

/* ---------- taskbar ---------- */

const Taskbar = styled.nav`
  display: grid;
  grid-template-columns: 1fr 336px 1fr;
  align-items: center;
  height: 28px;
  background: linear-gradient(90deg, #e6effc, #e4f1fb 60%, #d2f7f9);
  font: 7px/10px ${UI};
`;
const Weather = styled.button`
  display: flex;
  align-items: center;
  justify-self: start;
  gap: 5px;
  padding-left: 12px;
  text-align: left;
  color: #222;
  line-height: 9px;
  small { display: block; font-size: 7px; color: #666; }
`;
const Apps = styled.div`
  display: grid;
  grid-template-columns: repeat(13, 1fr);
`;
const AppButton = styled.button<{ $mark?: string }>`
  position: relative;
  display: grid;
  place-items: center;
  height: 24px;
  border-radius: 2px;
  ${(p) => p.$mark && css`
    background: ${p.$mark === "active" ? "linear-gradient(90deg, transparent 2px, #fbf6f8 2px, #fbf6f8 calc(100% - 2px), transparent 0)" : "none"};
    &::after {
      content: "";
      position: absolute;
      bottom: 0;
      width: ${p.$mark === "active" ? 9 : 4}px;
      height: 2px;
      border-radius: 1px;
      background: ${p.$mark === "active" ? "#1672c4" : "#858b92"};
    }
  `}
`;
const Tray = styled.div`
  display: flex;
  align-items: center;
  justify-self: end;
  gap: 4px;
  padding-right: 11px;
`;
const TrayButton = styled.button`
  width: 11px;
  height: 14px;
  display: grid;
  place-items: center;
`;
const Clock = styled.button`
  width: 37px;
  text-align: right;
  line-height: 9px;
`;
const Count = styled.span`
  display: grid;
  place-items: center;
  width: 10px;
  height: 10px;
  border-radius: 50%;
  background: #1473d0;
  color: #fff;
  font-size: 7px;
`;

const APPS: [string, string?][] = [
  ["windows"], ["search"], ["desktops"], ["chat"], ["hexagon"], ["folder", "open"], ["firefox", "open"],
  ["blueApp"], ["edge"], ["paint", "open"], ["shield", "open"], ["notepad", "open"], ["seal", "active"],
];
const PALETTE: string[][] = [
  ["move", "rotate", "mirror"],
  ["mesh", "meshSplit"],
  ["flat", "flat2", "wall", "wall2", "orangeBox", "frame", "filmGrid", "roof"],
  ["zone", "device", "greenCross", "dot", "slice", "gear", "slice3d"],
  ["N", "D"],
  ["bucket", "dropper", "ruler"],
  ["legend"],
];

export default function App() {
  return (
    <>
      <GlobalStyle />
      <Shell>
        <TitleBar>
          <Seal $size={10} $font={8}>火</Seal>
          <Title>(illegal software, no license) PyroSim x64 Edition - Untitled</Title>
          <WindowButtons>
            <WindowButton aria-label="Minimize"><Icon name="min" size={7} /></WindowButton>
            <WindowButton aria-label="Restore"><Icon name="max" size={8} /></WindowButton>
            <WindowButton aria-label="Close"><Icon name="close" size={7} /></WindowButton>
          </WindowButtons>
        </TitleBar>
        <MenuBar>
          {["File", "Edit", "Model", "Devices", "Output", "Analysis", "View", "Help"].map((m) => <button key={m}>{m}</button>)}
        </MenuBar>
        <Bar $top>
          <Tools names="file open save" width={40} />
          <Sep />
          <Tools names="importIn exportOut" width={27} />
          <Sep />
          <Tools names="undo redo cut copy paste remove" width={81} />
          <Sep />
          <Tools names="props" width={14} />
          <Sep />
          <Group $w={27}>
            <SerifTool $on>SI</SerifTool>
            <SerifTool>EN</SerifTool>
          </Group>
          <Sep />
          <Tools names="obstNew holeNew ventNew slabNew crossNew dotNew devNew modelNew" width={108} />
          <Sep />
          <Tools names="tree" width={14} />
          <Picker label="Configuration" value="Default" width={62} />
          <Sep />
          <Tools names="run" width={13} />
          <CaretButton aria-label="Run options"><Down solid /></CaretButton>
          <Tools names="results" width={13} />
          <CaretButton aria-label="Results options"><Down solid /></CaretButton>
          <Tools names="flame" width={13} />
        </Bar>
        <Workspace>
          <Sidebar>
            <SidebarHead>
              <Group $w={13}><Tool $on aria-label="Navigate"><Icon name="axes" size={9} /></Tool></Group>
              <Sep $gap={2} />
              <Group $w={18}>
                <Tool aria-label="Collapse all"><ExpandIcon /></Tool>
                <Tool aria-label="Expand all"><ExpandIcon $plus /></Tool>
              </Group>
            </SidebarHead>
            <TreeBox><TreeRows /></TreeBox>
            <TreeFoot />
          </Sidebar>
          <Editor>
            <Bar>
              <Picker label="Reset view" value="Reset to Top" icon="reset" width={73} plain />
              <Sep />
              <Picker label="Render mode" value="Realistic with Outlines" icon="shaded" width={94} />
              <Sep $gap={2} />
              <Tools names="pointer" on="pointer" width={14} />
              <Sep />
              <Tools names="orbit person pan zoom zoomBox center gridOff fit" width={108} />
              <Sep />
              <FieldName $w={24} $indent={2}>Group:</FieldName>
              <Picker label="Group" value="Model" icon="modelIcon" width={87} />
            </Bar>
            <FilterBar $top>
              <FieldName $w={18}>Show:</FieldName>
              <Picker label="Show floors" value="All Floors" width={50} />
              <Tools names="calendar picture picture2" on="picture2" width={41} />
              <Sep $gap={2} />
              <Tools names="meshGray meshBlue meshOut" on="meshGray meshBlue" width={41} />
              <Sep $gap={2} />
              <Tools names="redShape obst hole vent dev cross gearGlow hvacGlow" on="obst hole vent dev cross gearGlow hvacGlow" width={108} />
              <Sep />
              <Tools names="zone numbers sliceGlow" on="sliceGlow" width={40} />
              <Sep />
              <Group $w={30}>
                <TextTool $on>LBL</TextTool>
                <TextTool $on>CAD</TextTool>
              </Group>
              <Sep />
              <Tools names="camera" width={14} />
            </FilterBar>
            <Stage>
              <Palette>
                {PALETTE.map((names) => (
                  <Section key={names[0]}>
                    {names.map((n) => (
                      <PaletteTool key={n} aria-label={n}>
                        {n.length === 1 ? <Letter>{n}</Letter> : <Icon name={n === "slice3d" ? "slice" : n} />}
                      </PaletteTool>
                    ))}
                  </Section>
                ))}
              </Palette>
              <Canvas>
                <AxisBox>
                  <svg viewBox="0 0 55 55" role="img" aria-label="Axes">
                    <g fill="none" stroke="#6f7695">
                      <path d="M14.500 14.500h27v27h-27zM18.500 18.500h19v19h-19zM14.500 14.500l4 4M41.500 14.500l-4 4M41.500 41.500l-4-4" />
                    </g>
                    <path d="M18.500 38V21M18 37.500h17" stroke="#e6e62a" fill="none" />
                    <path d="M16.500 23l2-5 2 5zM34 35.500l4 2-4 2zM14 41l5-3-2 4z" fill="#e6e62a" />
                    <text x="18" y="16" fill="#c9cddd" fontSize="7" fontFamily="Liberation Sans">Y</text>
                    <text x="40" y="38" fill="#c9cddd" fontSize="7" fontFamily="Liberation Sans">X</text>
                    <text x="14" y="42" fill="#f4f4f4" fontSize="5" fontFamily="Liberation Sans">Z</text>
                  </svg>
                </AxisBox>
              </Canvas>
            </Stage>
            <Status>
              <Coordinates>(-5.723, 0.837, 0) m</Coordinates>
              <Selected>Selected: 1 objects</Selected>
            </Status>
            <Tabs role="tablist">
              <Tab role="tab" $active>3D View</Tab>
              <Tab role="tab">2D View</Tab>
              <Tab role="tab">Record View</Tab>
            </Tabs>
          </Editor>
        </Workspace>
        <Taskbar>
          <Weather>
            <Icon name="weather" size={13} />
            <span>79°F<small>Mostly cloudy</small></span>
          </Weather>
          <Apps>
            {APPS.map(([n, mark]) => (
              <AppButton key={n} aria-label={n} $mark={mark}>
                {n === "seal" ? <Seal $size={14} $font={11}>火</Seal> : <Icon name={n} size={14} />}
              </AppButton>
            ))}
          </Apps>
          <Tray>
            {["chevUp", "sync", "plane", "speaker", "battery"].map((n) => (
              <TrayButton key={n} aria-label={n}><Icon name={n} size={n === "chevUp" ? 8 : 11} /></TrayButton>
            ))}
            <Clock>7:38 PM<br />9/29/2022</Clock>
            <Count>5</Count>
          </Tray>
        </Taskbar>
      </Shell>
    </>
  );
}
